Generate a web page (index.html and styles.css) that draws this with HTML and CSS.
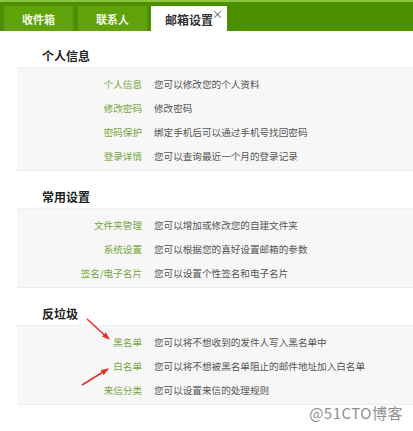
FILE: index.html
```html
<!DOCTYPE html>
<html lang="zh-CN">
<head>
    <meta charset="UTF-8">
    <meta name="viewport" content="width=device-width, initial-scale=1.0">
    <title>邮箱设置</title>
    <link rel="stylesheet" href="styles.css">
</head>
<body>
    <div class="tab-bar">
        <div class="tab">收件箱</div>
        <div class="tab">联系人</div>
        <div class="tab active">邮箱设置<span class="tab-close">×</span></div>
    </div>

    <div class="settings">
        <div class="section">
            <div class="section-title">个人信息</div>
            <div class="panel">
                <div class="row"><span class="label">个人信息</span><span class="desc">您可以修改您的个人资料</span></div>
                <div class="row"><span class="label">修改密码</span><span class="desc">修改密码</span></div>
                <div class="row"><span class="label">密码保护</span><span class="desc">绑定手机后可以通过手机号找回密码</span></div>
                <div class="row"><span class="label">登录详情</span><span class="desc">您可以查询最近一个月的登录记录</span></div>
            </div>
        </div>

        <div class="section">
            <div class="section-title">常用设置</div>
            <div class="panel">
                <div class="row"><span class="label">文件夹管理</span><span class="desc">您可以增加或修改您的自建文件夹</span></div>
                <div class="row"><span class="label">系统设置</span><span class="desc">您可以根据您的喜好设置邮箱的参数</span></div>
                <div class="row"><span class="label">签名/电子名片</span><span class="desc">您可以设置个性签名和电子名片</span></div>
            </div>
        </div>

        <div class="section">
            <div class="section-title">反垃圾</div>
            <div class="panel">
                <div class="row"><span class="label">黑名单</span><span class="desc">您可以将不想收到的发件人写入黑名单中</span></div>
                <div class="row"><span class="label">白名单</span><span class="desc">您可以将不想被黑名单阻止的邮件地址加入白名单</span></div>
                <div class="row"><span class="label">来信分类</span><span class="desc">您可以设置来信的处理规则</span></div>
            </div>
        </div>
    </div>

    <!-- annotation arrows drawn over the screenshot -->
    <svg class="arrows" width="413" height="431" viewBox="0 0 413 431">
        <defs>
            <marker id="head" markerWidth="8" markerHeight="6" refX="7" refY="3" orient="auto" markerUnits="userSpaceOnUse">
                <path d="M0,0 L8,3 L0,6 Z" fill="#e0302a"/>
            </marker>
        </defs>
        <line x1="87" y1="319" x2="109" y2="339" stroke="#e0302a" stroke-width="1.5" marker-end="url(#head)"/>
        <line x1="82" y1="385" x2="108" y2="369" stroke="#e0302a" stroke-width="1.5" marker-end="url(#head)"/>
    </svg>

    <div class="watermark">@51CTO博客</div>
</body>
</html>
```

FILE: styles.css
```css
body {
    margin: 0;
    font-family: "Noto Sans CJK SC", "Noto Sans", sans-serif;
    background: #fff;
    color: #444;
    width: 413px;
    height: 431px;
    overflow: hidden;
    position: relative;
}

.tab-bar {
    height: 29px;
    background: #4a8f00;
    border-top: 2px solid #8cc63e;
    display: flex;
    align-items: flex-end;
    gap: 3px;
    padding-left: 3px;
}

.tab {
    width: 71px;
    height: 26px;
    background: #5fa20a;
    border: 1px solid #4f9103;
    border-bottom: none;
    box-sizing: border-box;
    color: #f4fbe8;
    font-size: 11px;
    font-weight: bold;
    display: flex;
    align-items: center;
    justify-content: center;
}

.tab.active {
    width: 76px;
    height: 25px;
    background: #fff;
    border-color: #fff;
    color: #333;
    font-size: 12px;
    position: relative;
}

.tab-close {
    position: absolute;
    right: 3px;
    top: 1px;
    font-size: 11px;
    font-weight: normal;
    color: #555;
    line-height: 12px;
}

.settings {
    padding-top: 14px;
}

.section {
    margin-bottom: 15px;
}

.section-title {
    font-size: 12px;
    font-weight: bold;
    color: #222;
    padding-left: 42px;
    height: 22px;
    line-height: 22px;
}

.panel {
    margin-left: 17px;
    background: #f7f7f7;
    border-top: 1px solid #f0f0f0;
    border-bottom: 1px solid #ececec;
    padding: 4px 0 2px;
}

.row {
    height: 24px;
    display: flex;
    align-items: center;
    font-size: 9.6px;
}

.label {
    width: 125px;
    text-align: right;
    color: #72a63a;
    flex-shrink: 0;
}

.desc {
    margin-left: 12px;
    color: #555;
    white-space: nowrap;
}

.arrows {
    position: absolute;
    left: 0;
    top: 0;
    pointer-events: none;
}

.watermark {
    position: absolute;
    right: 10px;
    bottom: 8px;
    font-size: 15px;
    color: #8f8f8f;
    letter-spacing: 0.5px;
    text-shadow: 0 0 2px #fff;
}
```
